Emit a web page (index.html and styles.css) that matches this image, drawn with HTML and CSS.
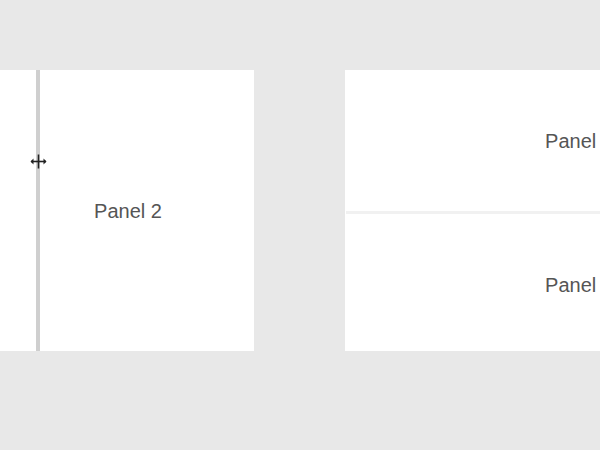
FILE: index.html
```html
<!DOCTYPE html>
<html>
<head>
<meta charset="utf-8">
<link rel="stylesheet" href="styles.css">
</head>
<body>
<div class="stage">
  <div class="group group-h">
    <div class="panel panel-narrow"></div>
    <div class="divider-v">
      <svg class="cursor" width="17" height="15" viewBox="0 0 17 15">
        <path d="M8.5 0.5V14.5" stroke="#222" stroke-width="1.6"/>
        <path d="M1 7.5H16" stroke="#222" stroke-width="1.6"/>
        <path d="M0.5 7.5L3.5 4.5V10.5Z" fill="#222"/>
        <path d="M16.5 7.5L13.5 4.5V10.5Z" fill="#222"/>
      </svg>
    </div>
    <div class="panel panel-wide"><span class="label">Panel 2</span></div>
  </div>
  <div class="group group-v">
    <div class="panel panel-top"><span class="label">Panel 1</span></div>
    <div class="divider-h"></div>
    <div class="panel panel-bottom"><span class="label">Panel 3</span></div>
  </div>
</div>
</body>
</html>
```
FILE: styles.css
```css
html, body {
  margin: 0;
  padding: 0;
  background: #e8e8e8;
  overflow: hidden;
  width: 600px;
  height: 450px;
}
.stage {
  display: flex;
  gap: 91px;
  padding-top: 70px;
  width: 1000px;
  font-family: "Liberation Sans", Arial, sans-serif;
}
.group {
  height: 281px;
  background: #fff;
  display: flex;
}
.group-h {
  width: 254px;
  flex-direction: row;
}
.group-v {
  width: 468px;
  flex-direction: column;
}
.panel {
  display: flex;
  align-items: center;
  justify-content: center;
  background: #fff;
}
.panel-narrow {
  width: 36px;
}
.panel-wide {
  flex: 1;
  padding-right: 38px;
}
.panel-top {
  height: 141px;
}
.panel-bottom {
  flex: 1;
  padding-top: 3px;
}
.divider-v {
  width: 4px;
  background: #cfcfcf;
  position: relative;
}
.divider-h {
  height: 3px;
  margin-left: 1px;
  background: #f1f1f1;
}
.label {
  font-size: 20px;
  color: #555;
  padding-top: 2px;
}
.cursor {
  position: absolute;
  left: -6px;
  top: 84px;
}
```
